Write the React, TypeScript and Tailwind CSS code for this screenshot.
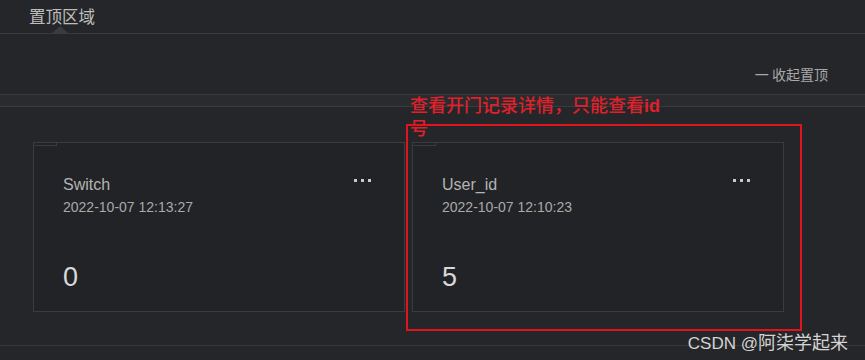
import React from 'react';

const cards = [
  { title: 'Switch', time: '2022-10-07 12:13:27', value: '0' },
  { title: 'User_id', time: '2022-10-07 12:10:23', value: '5' },
];

const sans = { fontFamily: '"Liberation Sans", "Noto Sans CJK SC", sans-serif' };
const cjk = { fontFamily: '"Noto Sans CJK SC", sans-serif' };

const Dots: React.FC = () => (
  <div className="flex gap-[4px] mt-[4px]">
    <span className="w-[3px] h-[3px] bg-[#c9c9c9]" />
    <span className="w-[3px] h-[3px] bg-[#c9c9c9]" />
    <span className="w-[3px] h-[3px] bg-[#c9c9c9]" />
  </div>
);

const Card: React.FC<{ title: string; time: string; value: string }> = ({ title, time, value }) => (
  <div className="relative w-[372px] h-[170px] border border-[#3b3c3f] bg-[#222326] pl-[29px] pr-[33px] pt-[32px] flex flex-col">
    <div className="absolute left-0 top-0 w-[23px] h-[3px] border-r border-b border-[#3b3c3f]" />
    <div className="flex justify-between items-start">
      <div className="text-[16px] leading-[20px] text-[#b4b4b4]">{title}</div>
      <Dots />
    </div>
    <div className="text-[14px] leading-[17px] mt-[4px] text-[#a9a9a9]">{time}</div>
    <div className="text-[27px] leading-[30px] mt-[46px] text-[#d8d8d8]">{value}</div>
  </div>
);

export default function App() {
  return (
    <div className="relative w-[865px] h-[360px] overflow-hidden bg-[#252629]" style={sans}>
      <div className="relative h-[34px] border-b border-[#3a3b3e]">
        <div className="pl-[29px] pt-[5px] text-[16.5px] leading-[22px] text-[#bdbdbd]" style={cjk}>
          置顶区域
        </div>
        <div className="absolute left-[52px] bottom-0 w-0 h-0 border-l-[8px] border-r-[8px] border-b-[7px] border-l-transparent border-r-transparent border-b-[#3a3b3e]" />
      </div>

      <div className="h-[60px] flex justify-end items-start pt-[31px] pr-[37px]">
        <span className="text-[14px] leading-[19px] text-[#a8a8a8]" style={cjk}>
          一 收起置顶
        </span>
      </div>

      <div className="h-[13px] border-y border-[#3a3b3e] bg-[#2a2b2e]" />

      <div className="flex gap-[7px] pl-[33px] pt-[35px]">
        {cards.map((c) => (
          <Card key={c.title} {...c} />
        ))}
      </div>

      <div className="mt-[33px] border-t border-[#37383b]" />

      <div
        className="absolute left-[410px] top-[94px] w-[262px] text-[18px] leading-[21px] font-medium text-[#e0202a]"
        style={{ fontFamily: '"Noto Sans CJK SC", serif' }}
      >
        查看开门记录详情，只能查看<span className="font-bold" style={sans}>id</span>号
      </div>
      <div className="absolute left-[406px] top-[124px] w-[396px] h-[207px] border-2 border-[#e0141e]" />

      <div className="absolute right-[17px] top-[330px] flex items-baseline leading-[22px] text-[#d4d4d4]">
        <span className="text-[17px]" style={sans}>CSDN @</span>
        <span className="text-[18px]" style={cjk}>阿柒学起来</span>
      </div>
    </div>
  );
}
